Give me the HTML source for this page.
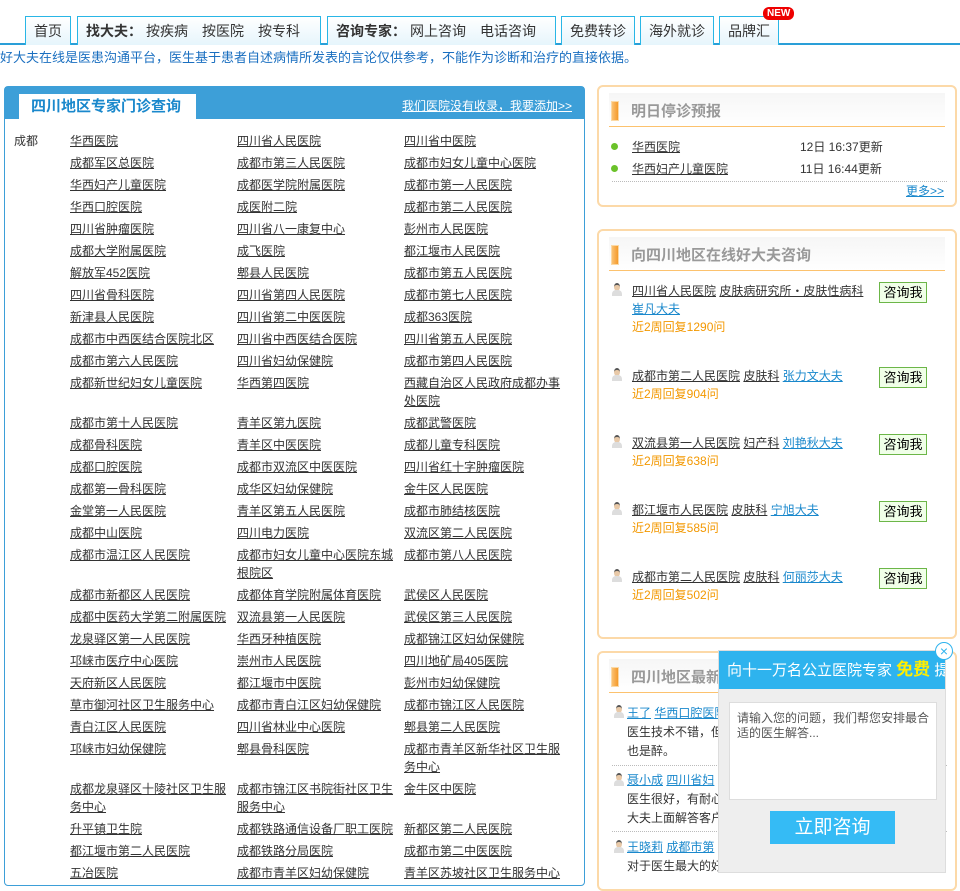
<!DOCTYPE html>
<html><head><meta charset="utf-8"><style>
*{margin:0;padding:0;box-sizing:border-box}
body{width:960px;height:873px;overflow:hidden;background:#fff;font-family:"Liberation Sans","Noto Sans CJK SC",sans-serif;font-size:12px;color:#333;position:relative}
a{color:#333;text-decoration:underline}
.nav{position:absolute;left:0;top:0;width:960px;height:45px;border-bottom:2px solid #2a9fd8}
.tab{position:absolute;top:16px;height:29px;border:1px solid #29b6e6;border-bottom:none;background:linear-gradient(#fff,#e6f5fc);font-size:14px;line-height:28px;padding:0 8px;color:#333;white-space:nowrap}
.tab b{font-weight:bold;margin-right:4px}
.tab s{text-decoration:none;margin-right:14px}
.new{position:absolute;left:763px;top:7px;background:#e00;color:#fff;font-size:10px;line-height:13px;padding:0 4px;border-radius:6px;font-weight:bold}
.notice{position:absolute;left:0;top:48px;font-size:13px;color:#1a6fc0;line-height:20px;white-space:nowrap}
.left{position:absolute;left:4px;top:86px;width:581px;height:800px;border:1px solid #3d9fd8;border-radius:4px}
.lhead{height:32px;background:#3d9fd8;position:relative}
.ltab{position:absolute;left:14px;top:7px;width:177px;height:25px;background:#fff;color:#1a88cc;font-size:15px;font-weight:bold;line-height:26px;padding-left:12px}
.lhead a{position:absolute;right:12px;top:10px;color:#fff;font-size:12px}
.city{position:absolute;left:9px;top:45px}
.grid{position:absolute;left:65px;top:45px;display:grid;grid-template-columns:167px 167px 162px;line-height:18px;row-gap:4px}
.grid a{display:block}
.box{position:absolute;left:597px;width:360px;border:2px solid #fcd9a8;border-radius:6px;background:#fff}
.bh{margin:6px 10px 0;height:34px;border-bottom:1px solid #fcc26e;position:relative;background:linear-gradient(#f6f6f6,#fff)}
.bh i{position:absolute;left:2px;top:8px;width:8px;height:20px;background:linear-gradient(90deg,#fbc172,#f49a2b);border:1px solid #fbd9a5}
.bh span{position:absolute;left:22px;top:7px;font-size:15px;font-weight:bold;color:#999}
.row{position:absolute;font-size:12px}
.dot{position:absolute;width:7px;height:7px;border-radius:50%;background:#6bc22a}
.doc{position:absolute;left:12px;width:12px;height:14px}
.doc:before{content:"";position:absolute;left:3px;top:0;width:6px;height:6px;border-radius:50%;background:#e8c9a8;border-top:2px solid #555}
.doc:after{content:"";position:absolute;left:1px;top:7px;width:10px;height:6px;background:#ddd;border-radius:4px 4px 0 0}
.ask{position:absolute;left:280px;width:48px;height:21px;border:1px solid #6cb648;background:#f0ffe8;font-size:13px;text-align:center;line-height:19px;color:#000}
.blue{color:#1a88cc}
.org{color:#f39800}
.pop{position:absolute;left:718px;top:650px;width:228px;height:223px;background:#eee;border:1px solid #ddd}
.ph{height:38px;background:#2eb3ee;color:#fff;font-size:15px;line-height:37px;padding-left:8px;white-space:nowrap;overflow:hidden}
.ph b{color:#ffee00;font-size:17px}
.ta{position:absolute;left:10px;top:51px;width:208px;height:98px;background:#fff;border:1px solid #ddd;padding:8px 7px;color:#555;line-height:15px}
.btn{position:absolute;left:51px;top:160px;width:125px;height:33px;background:#35bbf5;color:#fff;font-size:19px;text-align:center;line-height:33px}
.close{position:absolute;left:935px;top:642px;width:18px;height:18px;border-radius:50%;border:1px solid #2eb3ee;background:#fff;color:#2eb3ee;font-size:14px;text-align:center;line-height:16px}
</style></head><body>
<div class="nav">
<div class="tab" style="left:25px;width:46px">首页</div>
<div class="tab" style="left:77px;width:244px"><b>找大夫：</b><s>按疾病</s><s>按医院</s>按专科</div>
<div class="tab" style="left:327px;width:229px"><b>咨询专家：</b><s>网上咨询</s>电话咨询</div>
<div class="tab" style="left:561px;width:74px">免费转诊</div>
<div class="tab" style="left:640px;width:74px">海外就诊</div>
<div class="tab" style="left:719px;width:60px">品牌汇</div>
<div class="new">NEW</div>
</div>
<div class="notice">好大夫在线是医患沟通平台，医生基于患者自述病情所发表的言论仅供参考，不能作为诊断和治疗的直接依据。</div>

<div class="left">
<div class="lhead"><div class="ltab">四川地区专家门诊查询</div><a>我们医院没有收录，我要添加&gt;&gt;</a></div>
<div class="city">成都</div>
<div class="grid">
<a>华西医院</a><a>四川省人民医院</a><a>四川省中医院</a>
<a>成都军区总医院</a><a>成都市第三人民医院</a><a>成都市妇女儿童中心医院</a>
<a>华西妇产儿童医院</a><a>成都医学院附属医院</a><a>成都市第一人民医院</a>
<a>华西口腔医院</a><a>成医附二院</a><a>成都市第二人民医院</a>
<a>四川省肿瘤医院</a><a>四川省八一康复中心</a><a>彭州市人民医院</a>
<a>成都大学附属医院</a><a>成飞医院</a><a>都江堰市人民医院</a>
<a>解放军452医院</a><a>郫县人民医院</a><a>成都市第五人民医院</a>
<a>四川省骨科医院</a><a>四川省第四人民医院</a><a>成都市第七人民医院</a>
<a>新津县人民医院</a><a>四川省第二中医医院</a><a>成都363医院</a>
<a>成都市中西医结合医院北区</a><a>四川省中西医结合医院</a><a>四川省第五人民医院</a>
<a>成都市第六人民医院</a><a>四川省妇幼保健院</a><a>成都市第四人民医院</a>
<a>成都新世纪妇女儿童医院</a><a>华西第四医院</a><a>西藏自治区人民政府成都办事处医院</a>
<a>成都市第十人民医院</a><a>青羊区第九医院</a><a>成都武警医院</a>
<a>成都骨科医院</a><a>青羊区中医医院</a><a>成都儿童专科医院</a>
<a>成都口腔医院</a><a>成都市双流区中医医院</a><a>四川省红十字肿瘤医院</a>
<a>成都第一骨科医院</a><a>成华区妇幼保健院</a><a>金牛区人民医院</a>
<a>金堂第一人民医院</a><a>青羊区第五人民医院</a><a>成都市肺结核医院</a>
<a>成都中山医院</a><a>四川电力医院</a><a>双流区第二人民医院</a>
<a>成都市温江区人民医院</a><a>成都市妇女儿童中心医院东城根院区</a><a>成都市第八人民医院</a>
<a>成都市新都区人民医院</a><a>成都体育学院附属体育医院</a><a>武侯区人民医院</a>
<a>成都中医药大学第二附属医院</a><a>双流县第一人民医院</a><a>武侯区第三人民医院</a>
<a>龙泉驿区第一人民医院</a><a>华西牙种植医院</a><a>成都锦江区妇幼保健院</a>
<a>邛崃市医疗中心医院</a><a>崇州市人民医院</a><a>四川地矿局405医院</a>
<a>天府新区人民医院</a><a>都江堰市中医院</a><a>彭州市妇幼保健院</a>
<a>草市御河社区卫生服务中心</a><a>成都市青白江区妇幼保健院</a><a>成都市锦江区人民医院</a>
<a>青白江区人民医院</a><a>四川省林业中心医院</a><a>郫县第二人民医院</a>
<a>邛崃市妇幼保健院</a><a>郫县骨科医院</a><a>成都市青羊区新华社区卫生服务中心</a>
<a>成都龙泉驿区十陵社区卫生服务中心</a><a>成都市锦江区书院街社区卫生服务中心</a><a>金牛区中医院</a>
<a>升平镇卫生院</a><a>成都铁路通信设备厂职工医院</a><a>新都区第二人民医院</a>
<a>都江堰市第二人民医院</a><a>成都铁路分局医院</a><a>成都市第二中医医院</a>
<a>五冶医院</a><a>成都市青羊区妇幼保健院</a><a>青羊区苏坡社区卫生服务中心</a>
</div>
</div>

<div class="box" style="top:85px;height:122px">
<div class="bh"><i></i><span>明日停诊预报</span></div>
<div class="dot" style="left:12px;top:56px"></div><a class="row" style="left:33px;top:51px">华西医院</a><div class="row" style="left:201px;top:51px">12日 16:37更新</div>
<div class="dot" style="left:12px;top:78px"></div><a class="row" style="left:33px;top:73px">华西妇产儿童医院</a><div class="row" style="left:201px;top:73px">11日 16:44更新</div>
<div style="position:absolute;left:13px;top:94px;width:335px;border-top:1px dotted #bbb"></div>
<a class="row blue" style="left:307px;top:95px">更多&gt;&gt;</a>
</div>

<div class="box" style="top:229px;height:410px">
<div class="bh"><i></i><span>向四川地区在线好大夫咨询</span></div>
<div class="doc" style="top:52px"></div><div class="row" style="left:33px;top:51px;width:240px;line-height:18px"><a>四川省人民医院</a> <a>皮肤病研究所・皮肤性病科</a><br><a class="blue">崔凡大夫</a><br><span class="org">近2周回复1290问</span></div><div class="ask" style="top:51px">咨询我</div>
<div class="doc" style="top:137px"></div><div class="row" style="left:33px;top:136px;line-height:18px"><a>成都市第二人民医院</a> <a>皮肤科</a> <a class="blue">张力文大夫</a><br><span class="org">近2周回复904问</span></div><div class="ask" style="top:136px">咨询我</div>
<div class="doc" style="top:204px"></div><div class="row" style="left:33px;top:203px;line-height:18px"><a>双流县第一人民医院</a> <a>妇产科</a> <a class="blue">刘艳秋大夫</a><br><span class="org">近2周回复638问</span></div><div class="ask" style="top:203px">咨询我</div>
<div class="doc" style="top:271px"></div><div class="row" style="left:33px;top:270px;line-height:18px"><a>都江堰市人民医院</a> <a>皮肤科</a> <a class="blue">宁旭大夫</a><br><span class="org">近2周回复585问</span></div><div class="ask" style="top:270px">咨询我</div>
<div class="doc" style="top:338px"></div><div class="row" style="left:33px;top:337px;line-height:18px"><a>成都市第二人民医院</a> <a>皮肤科</a> <a class="blue">何丽莎大夫</a><br><span class="org">近2周回复502问</span></div><div class="ask" style="top:337px">咨询我</div>
</div>

<div class="box" style="top:651px;height:240px">
<div class="bh"><i></i><span>四川地区最新</span></div>
<div class="doc" style="top:52px;left:14px"></div><div class="row" style="left:28px;top:51px;line-height:19px;width:320px"><a class="blue">王了</a> <a class="blue">华西口腔医院</a><br>医生技术不错，但<br>也是醉。</div>
<div style="position:absolute;left:13px;top:112px;width:335px;border-top:1px dotted #bbb"></div>
<div class="doc" style="top:120px;left:14px"></div><div class="row" style="left:28px;top:118px;line-height:19px;width:320px"><a class="blue">聂小成</a> <a class="blue">四川省妇</a><br>医生很好，有耐心<br>大夫上面解答客户</div>
<div style="position:absolute;left:13px;top:178px;width:335px;border-top:1px dotted #bbb"></div>
<div class="doc" style="top:187px;left:14px"></div><div class="row" style="left:28px;top:185px;line-height:19px;width:330px;white-space:nowrap"><a class="blue">王晓莉</a> <a class="blue">成都市第</a><br>对于医生最大的好感就是有耐心，愿意回答病人问题，主要</div>
</div>

<div class="pop">
<div class="ph">向十一万名公立医院专家 <b>免费</b> 提问</div>
<div class="ta">请输入您的问题，我们帮您安排最合适的医生解答...</div>
<div class="btn">立即咨询</div>
</div>
<div class="close">×</div>
</body></html>
